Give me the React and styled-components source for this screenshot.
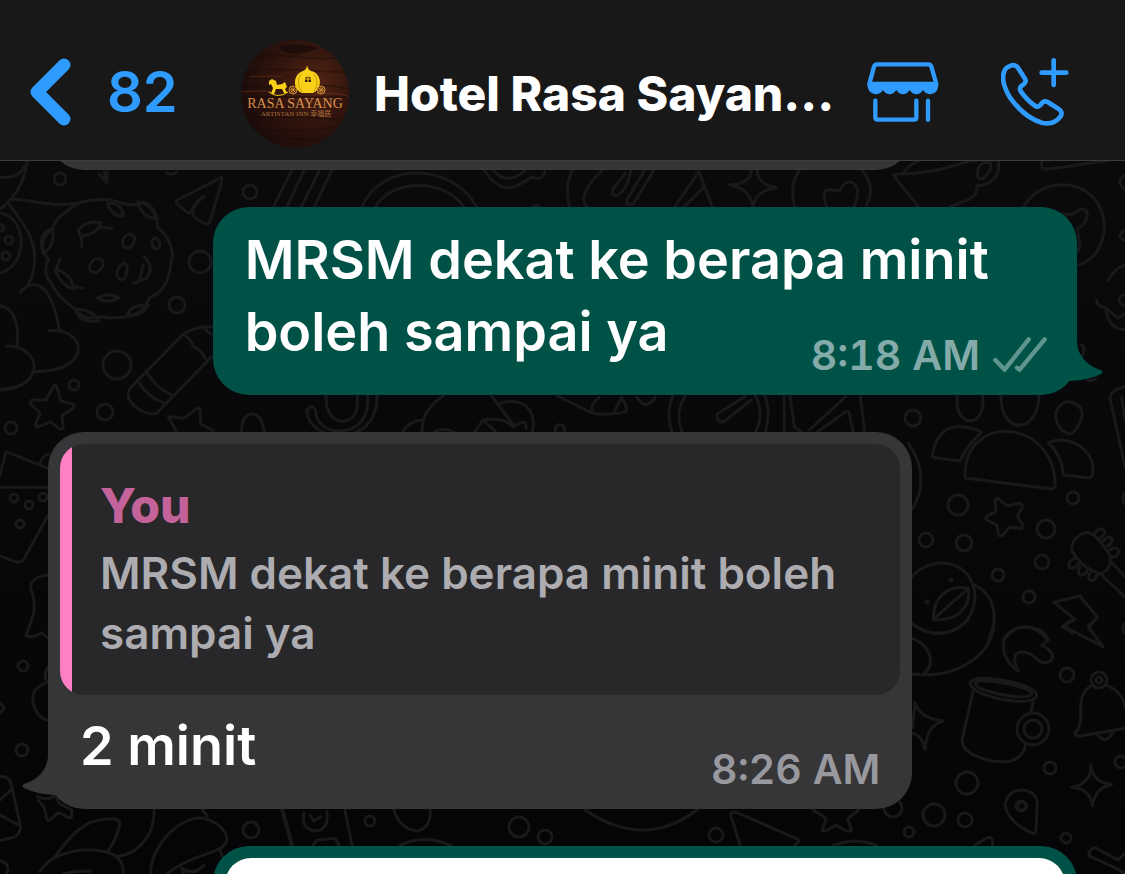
import React from "react";
import styled, { createGlobalStyle } from "styled-components";

const GlobalStyle = createGlobalStyle`
  * {
    box-sizing: border-box;
  }

  body {
    margin: 0;
    background-color: #08080a;
    font-family: Inter, "Liberation Sans", "Noto Sans CJK TC", sans-serif;
  }

  button {
    padding: 0;
    border: 0;
    background: none;
    color: inherit;
    font: inherit;
    cursor: pointer;
  }
`;

const Screen = styled.div`
  display: flex;
  flex-direction: column;
  height: 100vh;
  overflow: hidden;
`;

const Header = styled.header`
  display: flex;
  align-items: center;
  flex-shrink: 0;
  padding: 24px 56px 0 29px;
  height: 161px;
  background-color: #181818;
  border-bottom: 1px solid #3c3c3e;
  color: #2f9bff;
`;

const BackButton = styled.button`
  display: flex;
  align-items: center;
  gap: 34px;
  flex: 0 0 211px;
`;

const UnreadCount = styled.span`
  font-size: 56px;
  line-height: 68px;
  font-weight: 600;
`;

const Contact = styled.div`
  display: flex;
  align-items: center;
  gap: 24px;
  flex: 1;
  min-width: 0;
  padding-top: 4px;
`;

const ContactName = styled.h1`
  margin: 0;
  color: #ffffff;
  font-size: 48px;
  line-height: 60px;
  font-weight: 800;
  white-space: nowrap;
`;

const Actions = styled.div`
  display: flex;
  align-items: center;
  gap: 62px;
`;

const IconButton = styled.button`
  display: flex;
`;

const Icon = styled.svg`
  display: block;
  flex-shrink: 0;
  fill: none;
  stroke: currentColor;
  stroke-linecap: round;
  stroke-linejoin: round;
`;

const Chat = styled.main`
  position: relative;
  flex: 1;
  min-height: 0;
  overflow: hidden;
  background: linear-gradient(#0a0a0c, #050507);
`;

const Wallpaper = styled.svg`
  position: absolute;
  top: 0;
  left: 0;
  width: 100%;
  height: 100%;
  fill: none;
  stroke: #19191b;
  stroke-width: 3;
  stroke-linecap: round;
  stroke-linejoin: round;

  path {
    vector-effect: non-scaling-stroke;
  }
`;

const Messages = styled.div`
  position: relative;
  display: flex;
  flex-direction: column;
  gap: 37px;
  margin-top: -71px;
  padding: 0 48px;
`;

const Bubble = styled.article`
  position: relative;
  flex-shrink: 0;
  align-self: ${(props) => (props.$sent ? "flex-end" : "flex-start")};
  width: 84%;
  min-height: 80px;
  padding: ${(props) => (props.$framed ? "12px" : "0")};
  border-radius: 36px;
  background-color: ${(props) => (props.$sent ? "#005247" : "#363638")};
  color: #ffffff;
`;

const Body = styled.div`
  display: flow-root;
  padding: ${(props) => (props.$quoted ? "15px 20px 8px" : "17px 30px 20px 32px")};
  font-size: 54px;
  line-height: 72px;
  font-weight: 600;
`;

const Text = styled.p`
  display: inline;
  margin: 0;
`;

const Meta = styled.div`
  float: right;
  display: flex;
  align-items: center;
  gap: 13px;
  margin-top: 39px;
  color: ${(props) => (props.$sent ? "#84abaa" : "#98989f")};
  font-size: 41px;
  line-height: 40px;
  font-variant-numeric: tabular-nums;
`;

const Quote = styled.blockquote`
  margin: 0;
  padding: 32px 28px 32px 40px;
  border-radius: 24px;
  background: linear-gradient(to right, #ff7fc4 12px, #28282a 12px);
`;

const QuoteAuthor = styled.h2`
  margin: 0 0 7px;
  color: #c4629a;
  font-size: 48px;
  line-height: 60px;
  font-weight: 800;
`;

const QuoteText = styled.p`
  margin: 0;
  color: #acacb1;
  font-size: 44px;
  line-height: 60px;
  font-weight: 600;
`;

const TailShape = styled.svg`
  position: absolute;
  bottom: 0;
  ${(props) => (props.$sent ? "right: -26px;" : "left: -26px;")}
  transform: ${(props) => (props.$sent ? "none" : "scaleX(-1)")};
  fill: ${(props) => (props.$sent ? "#005247" : "#363638")};
`;

const Attachment = styled.div`
  height: 120px;
  border-radius: 26px;
  background-color: #ffffff;
`;

const circles = [
  [60, 179, 6], [200, 262, 11], [177, 305, 8], [117, 365, 14], [74, 385, 5],
  [105, 412, 8], [11, 428, 6], [250, 192, 7], [913, 418, 8], [958, 505, 10],
  [1073, 498, 6], [926, 540, 7], [964, 543, 8], [1046, 529, 9], [1042, 562, 7],
  [998, 575, 6], [1029, 597, 6], [1067, 675, 7], [1050, 768, 6], [967, 783, 11],
  [934, 815, 11], [965, 820, 7], [909, 832, 5], [893, 808, 9], [1066, 838, 5],
  [1121, 762, 6], [1021, 806, 5], [22, 750, 6], [251, 830, 8], [0, 869, 8],
  [14, 498, 4], [29, 505, 4], [43, 497, 4], [20, 524, 4], [23, 666, 5],
  [370, 821, 5], [519, 827, 10], [545, 837, 7], [716, 835, 7],
  [9, 240, 4], [6, 256, 4], [1, 228, 3], [1124, 300, 5], [951, 580, 1],
  [927, 602, 1], [1099, 680, 8], [1099, 680, 3], [1033, 729, 9], [1033, 729, 16],
];

// each group of doodles has its own origin and scale
const doodles = [
  {
    transform: "translate(0 150) scale(.3333)",
    paths: [
      "M82 30Q75 100 30 150Q10 175-10 180M0 82Q60 85 72 50M35 148C100 148 150 175 238 158",
      "M25 160C70 220 105 260 104 330Q102 375 85 403M0 190C80 200 90 340 0 370",
      "M62 426C85 395 125 395 148 440Q170 480 177 538M148 542C215 535 245 580 232 610C220 650 160 665 105 665",
      "M0 467C50 475 58 540 50 588M18 588C75 588 105 620 102 655C95 700 45 720 0 719",
      "M240 158C300 140 345 150 375 162Q410 168 430 155C460 165 475 200 472 232C510 260 522 310 515 325C510 350 512 420 450 442Q430 490 385 498Q350 508 305 500Q255 515 226 478Q170 440 155 400Q125 370 145 330Q105 280 158 235Q165 200 240 158",
      "M322 160Q365 155 370 198Q335 200 322 160M410 155Q455 160 468 205Q430 205 410 155M158 235Q110 250 130 310Q165 290 158 235",
      "M235 240Q260 210 303 218Q290 255 240 258ZM303 232L335 235M245 262V290M165 358Q215 370 222 418Q180 405 165 358M180 325L170 355M225 410L248 414",
      "M370 265Q390 240 404 262Q405 285 385 295Q362 295 370 265M458 268Q470 255 480 280Q478 300 465 296Q452 285 458 268M270 345Q280 320 305 328Q318 348 290 368Q262 368 270 345M372 338Q390 350 375 385Q358 395 350 375Q352 350 372 338",
      "M432 320Q465 350 440 385L400 400M430 345L420 385M292 445Q325 425 357 443Q325 462 292 445M382 492Q395 462 445 465Q430 495 382 498M226 478Q270 475 300 512Q240 525 226 478",
      "M312 30V60L320 100L322 65M298 72L314 92M500 68Q515 78 530 66",
      "M665 82L532 150Q525 158 535 165L562 187Q570 192 575 182Q585 155 612 140Q580 165 578 185Q578 205 615 220Q628 225 632 208L665 95Z",
      "M635 530Q580 530 550 552L390 715Q375 740 400 765Q440 800 470 790L635 620M550 552Q575 570 580 590Q605 600 615 625M437 663Q470 715 515 735M412 690Q440 740 490 758M615 530Q620 550 635 552",
      "M160 710Q168 702 172 715L182 753L218 762Q226 768 218 775L186 797L190 832Q186 842 178 836L152 816L115 830Q102 832 108 818L120 790L92 762Q86 750 100 750L138 750Z",
      "M528 843L505 800L552 805L590 775Q600 770 600 782L602 822L640 842",
    ],
  },
  {
    transform: "translate(0 380) scale(.3333)",
    paths: [
      "M0 285L18 215L145 265M0 322H145M120 250Q130 225 145 222M145 405L70 540Q60 550 45 545L0 528",
      "M145 585Q90 590 92 625Q108 660 100 705L78 768Q100 775 125 758L145 775M145 860Q130 880 138 900",
      "M725 155Q725 100 760 102Q785 105 792 155M0 28Q60 25 85 0",
      "M144 905Q95 925 98 960Q105 1010 145 1022M0 970Q15 980 10 990L0 998",
    ],
  },
  {
    transform: "translate(0 680) scale(.3333)",
    paths: [
      "M0 290Q30 285 35 320L62 440Q60 465 40 472L0 482M0 360L38 325M0 405L55 435",
      "M112 350Q145 365 165 345L178 370L215 390V405Q215 420 200 410L175 398L150 420Q138 425 138 405L132 380L115 362",
      "M165 530Q235 430 290 422Q370 405 358 440Q350 475 325 512M120 575Q150 520 250 510Q375 505 370 582M462 390C465 460 420 520 352 530M190 582Q235 570 272 574",
      "M452 582C450 500 540 405 610 415C670 430 705 480 660 505C610 530 560 535 500 582M608 390L622 408M545 565Q580 590 612 555M545 565Q550 585 560 590M660 510L668 532M848 390L878 495",
    ],
  },
  {
    transform: "translate(240 155) scale(.408 .3333)",
    paths: [
      "M127 45L82 156M157 45L115 156M195 45L150 156M225 45L182 156",
      "M298 156C345 20 520 20 580 156M332 156C370 70 505 70 548 156M598 45C640 120 670 105 715 66Q740 80 747 50M620 45Q655 95 700 45M718 156Q727 148 735 156",
      "M815 45Q795 90 808 156M888 45Q825 120 850 156M958 45Q950 105 922 123Q905 120 918 95L945 55M1015 45L965 145Q945 155 948 135L992 45",
      "M1065 156L1125 50L1158 156M1088 156L1138 95M1252 45Q1255 85 1200 90Q1250 100 1257 156Q1265 105 1315 98Q1265 85 1268 45",
      "M1372 45Q1345 90 1360 156M1525 45Q1560 100 1535 150M1438 156Q1420 100 1450 105L1470 108Q1480 75 1500 82Q1525 100 1505 156",
    ],
  },
  {
    transform: "translate(210 390) scale(.44 .3333)",
    paths: [
      "M264 18C260 115 335 115 335 40V18M358 18C370 150 240 150 240 60Q230 40 220 60C222 160 380 180 380 18",
      "M530 18Q480 60 482 126M438 126Q450 95 480 90M640 18L690 105M660 40C710 20 745 60 732 126M620 90Q670 80 690 112Q720 80 718 115M602 126L620 90L650 126M510 126Q530 110 555 126",
      "M790 18L870 70Q910 78 945 65Q950 50 935 22L920 62M885 22Q860 50 870 65M970 22Q990 65 1012 22M785 126V112Q795 95 805 112V126",
      "M1052 18Q1035 70 1050 126M1080 18Q1055 70 1073 126M1240 18Q1260 70 1240 126M1262 18Q1275 70 1262 126M1215 20L1153 72Q1150 100 1168 95L1230 30M1305 18V126M1318 18L1328 110L1345 126M1362 120L1445 20M1380 126L1445 65Q1455 60 1455 90L1462 126M1478 20L1488 126",
    ],
  },
  {
    transform: "translate(150 795) scale(.4847 .3333)",
    paths: [
      "M272 45L292 152M402 45L417 152M318 55Q310 100 340 108Q370 105 365 50M330 60L338 78L352 65M335 152L345 135L382 130L390 152",
      "M503 45Q515 100 550 108Q580 100 578 45M515 152Q565 115 622 152M898 45Q1020 165 1128 45",
      "M1218 152L1198 60Q1200 45 1215 55L1332 130Q1345 135 1330 152M1368 45L1395 70L1387 105Q1390 115 1415 90Q1445 118 1447 105L1440 70L1462 45M1408 152Q1455 125 1500 152",
    ],
  },
  {
    transform: "translate(840 30) scale(.3333)",
    paths: [
      "M165 432Q250 435 350 405Q395 390 410 392M190 430Q210 400 240 392M160 435L235 530M475 392Q485 460 410 468Q415 500 370 515L330 530M412 425Q420 390 450 398Q460 420 430 445Q410 450 412 425",
      "M605 392V410Q610 420 630 417L800 392",
      "M552 530C600 440 750 440 785 545C810 620 770 690 715 705M670 550Q700 560 715 540Q740 530 742 555Q735 590 712 595L718 630Q725 645 712 665",
      "M855 435Q825 455 855 480M855 600Q825 620 855 632M855 705Q825 715 805 750",
    ],
  },
  {
    transform: "translate(780 300) scale(.3333)",
    paths: [
      "M950 0Q950 20 975 22L1015 55L1035 40M978 30Q985 85 1035 90M905 135Q920 145 905 170M925 240Q940 245 948 235",
    ],
  },
  {
    transform: "translate(880 370) scale(.3333)",
    paths: [
      "M232 78C220 175 320 180 308 78M362 78C365 200 475 190 477 78M528 125Q545 92 570 96Q612 105 606 140Q590 190 565 192Q525 175 528 125",
      "M157 255Q175 165 245 170Q280 172 305 187Q265 220 240 273L165 263Q155 262 157 255M255 320C250 130 520 140 526 345Q525 358 510 356L262 325Q255 325 255 320M505 218Q545 200 590 222Q645 255 638 310Q636 325 625 323L550 315Q545 255 505 218",
      "M85 220Q155 320 97 418M345 390Q352 380 362 392L382 408L415 400Q432 400 425 415L412 440L430 468Q428 478 415 474L388 472L368 495Q355 502 355 488L350 465L320 450Q312 442 325 436L348 425Z",
      "M95 620C160 550 280 570 285 680C280 790 165 820 95 760M160 748C160 670 215 645 265 655C275 720 220 755 160 748L262 658M285 645C350 680 355 750 325 810M370 810Q435 730 505 810",
      "M575 540Q575 500 620 487Q650 490 692 560Q695 600 660 612Q600 590 575 540M645 490Q660 465 675 485Q670 500 658 505M668 515Q688 490 697 510Q695 525 678 530M690 540Q710 525 717 545Q712 560 698 562M585 565Q560 575 568 592Q585 600 595 580M600 590Q590 610 602 615Q620 615 622 600M630 610Q620 630 635 632Q650 630 650 615M692 575L745 630M665 615L745 690",
      "M735 50Q690 60 690 85L735 290M725 80L735 150M585 748L522 697L600 678L652 742L625 768L640 790M585 748L548 770L580 790M735 370Q722 385 735 402",
    ],
  },
  {
    transform: "translate(880 620) scale(.3333)",
    paths: [
      "M97 55C150 75 170 130 130 163M97 163C240 175 345 100 342 0M97 10Q180 75 265 0",
      "M415 153C350 110 355 25 430 22Q500 25 503 62L485 76C540 100 515 140 480 125Q440 85 410 100Q395 115 415 153",
      "M575 0L550 18L670 80L625 22L645 0M735 10Q722 25 735 40",
      "M272 195C255 150 470 190 470 225C470 265 290 235 272 195M287 193C275 165 455 200 455 220C455 245 300 220 287 193M280 212L247 355C240 400 320 430 385 425Q430 415 437 372M460 242L452 280",
      "M640 195Q600 210 602 270Q605 320 585 340Q585 352 605 347L735 325M675 195Q725 210 735 260M655 347Q680 375 700 335",
      "M97 325L105 248Q118 295 190 303Q140 315 135 388Q125 345 97 340M632 435Q635 490 575 502Q630 505 637 557Q645 505 695 493Q640 490 632 435Z",
      "M460 640C385 610 370 560 378 545C390 495 470 500 472 550L468 630Q468 642 460 640M425 545Q440 548 440 560Q432 572 422 572Q408 565 412 553ZM285 675L325 652Q340 650 338 675",
      "M735 700L715 720L645 683Q625 688 627 708Q700 740 735 760",
    ],
  },
];

const Background = () => (
  <Wallpaper viewBox="0 161 1125 713" preserveAspectRatio="xMidYMin slice" aria-hidden="true">
    {circles.map(([x, y, r], index) => (
      <circle key={index} cx={x} cy={y} r={r} />
    ))}
    {doodles.map((group) => (
      <g key={group.transform} transform={group.transform}>
        {group.paths.map((d) => (
          <path key={d} d={d} />
        ))}
      </g>
    ))}
  </Wallpaper>
);

const AvatarImage = styled.svg`
  display: block;
  flex-shrink: 0;
  fill: none;
`;

const Avatar = () => (
  <AvatarImage width="110" height="110" viewBox="0 0 110 110" role="img" aria-label="Rasa Sayang">
    <defs>
      <radialGradient id="wood" cx="68%" cy="40%" r="65%">
        <stop offset="0" stopColor="#552616" />
        <stop offset=".5" stopColor="#34160e" />
        <stop offset="1" stopColor="#1f0d0b" />
      </radialGradient>
      <clipPath id="disc">
        <circle cx="55" cy="55" r="54" />
      </clipPath>
    </defs>
    <g clipPath="url(#disc)">
      <rect width="110" height="110" fill="url(#wood)" />
      <g stroke="#170a09" strokeWidth="2" opacity=".4">
        <path d="M0 20Q30 14 60 18T110 16M0 32Q40 28 110 34M0 47Q30 50 55 47T110 50" />
        <path d="M0 58H110M0 80Q50 75 110 82M0 90Q40 94 110 88M15 100H100" />
      </g>
      <path d="M0 53Q20 51 36 53M75 55Q95 52 110 58M10 38Q30 36 42 38" stroke="#814022" strokeWidth="1" opacity=".5" />
      <path d="M38 8Q58 2 78 9Q60 18 45 13Z" fill="#120808" opacity=".6" />
    </g>
    <g fill="#f8d017">
      <path d="M67 26Q68 31 71 32C82 34 83 50 73 54H62C52 50 53 35 63 32Q67 30 67 26Z" />
      <path d="M29 42L32 40L36 42L37 46L42 45L45 43L47 48L45 50L47 54H44L42 50H36L34 55H31L33 49L31 45L29 46Z" />
    </g>
    <path d="M29 53Q38 60 48 53" stroke="#f8d017" strokeWidth="1" />
    <g stroke="#c98d2c" strokeWidth="1">
      <circle cx="53" cy="51" r="4" />
      <circle cx="81" cy="51" r="4" />
      <path d="M49 51H57M53 47V55M50 48L56 54M56 48L50 54M77 51H85M81 47V55M78 48L84 54M84 48L78 54" />
      <path d="M61 35Q55 43 62 53M74 35Q80 43 74 52" stroke="#c99a10" />
    </g>
    <path d="M65 43V39Q68 36 71 39V43Z" fill="#3a1a10" />
    <path d="M68 37V43M65 40H71" stroke="#f8d017" strokeWidth="1" />
    <g fill="#d8924e" textAnchor="middle" fontFamily="'Liberation Serif', 'Noto Sans CJK TC', serif">
      <text x="55" y="69" fontSize="14">RASA SAYANG</text>
      <text x="56" y="77" fontSize="7" opacity=".7">ARTISTAN INN 幸福居</text>
    </g>
  </AvatarImage>
);

const ShopIcon = () => (
  <Icon width="72" height="61" viewBox="81 97 216 183" strokeWidth="13">
    <path d="M112 104H265Q272 104 274 111L289 163H88L102 111Q104 104 112 104Z" />
    <path
      d="M82 163H295Q295 192 272 194Q258 194 249 181Q240 194 229 194Q218 194 209 181Q200 194 189 194Q178 194 169 181Q160 194 149 194Q138 194 129 181Q120 194 106 194Q82 190 82 163Z"
      fill="currentColor"
      stroke="none"
    />
    <path d="M106 213V263Q106 270 113 270H222Q229 270 229 263V213M264 213V270" />
  </Icon>
);

const CallIcon = () => (
  <Icon width="68" height="68" viewBox="482 80 204 204" strokeWidth="14">
    <path d="M640 87V161M604 124H678" />
    <path d="M501 108Q520 95 532 108L554 142Q559 151 551 158L542 165Q536 172 542 181Q560 207 585 224Q592 229 599 222L607 213Q614 208 622 212L656 234Q669 242 660 256Q642 281 607 275Q553 260 509 199Q478 147 493 117Q496 111 501 108Z" />
  </Icon>
);

const Ticks = () => (
  <Icon width="54" height="36" viewBox="642 108 162 108" strokeWidth="13" color="#5f958f">
    <path d="M649 177L677 206L749 115M714 200L722 206L797 115" />
  </Icon>
);

const Tail = ({ sent }) => (
  <TailShape $sent={sent} width="46" height="54" viewBox="0 0 46 54" aria-hidden="true">
    <path d="M0 0H20C20 14 30 25 44 29Q47 31 44 33Q32 39 13 40L0 42Z" />
  </TailShape>
);

const App = () => (
  <Screen>
    <GlobalStyle />
    <Header>
      <BackButton aria-label="Back, 82 unread chats">
        <Icon width="44" height="68" viewBox="0 0 44 68" strokeWidth="13">
          <path d="M35 7L8 34L35 61" />
        </Icon>
        <UnreadCount>82</UnreadCount>
      </BackButton>
      <Contact>
        <Avatar />
        <ContactName>Hotel Rasa Sayan...</ContactName>
      </Contact>
      <Actions>
        <IconButton aria-label="Catalogue">
          <ShopIcon />
        </IconButton>
        <IconButton aria-label="Call">
          <CallIcon />
        </IconButton>
      </Actions>
    </Header>
    <Chat>
      <Background />
      <Messages>
        <Bubble />
        <Bubble $sent>
          <Body>
            <Text>MRSM dekat ke berapa minit boleh sampai ya</Text>
            <Meta $sent>
              <time>8:18 AM</time>
              <Ticks />
            </Meta>
          </Body>
          <Tail sent />
        </Bubble>
        <Bubble $framed>
          <Quote>
            <QuoteAuthor>You</QuoteAuthor>
            <QuoteText>MRSM dekat ke berapa minit boleh sampai ya</QuoteText>
          </Quote>
          <Body $quoted>
            <Text>2 minit</Text>
            <Meta>
              <time>8:26 AM</time>
            </Meta>
          </Body>
          <Tail />
        </Bubble>
        <Bubble $sent $framed>
          <Attachment />
        </Bubble>
      </Messages>
    </Chat>
  </Screen>
);

export default App;
